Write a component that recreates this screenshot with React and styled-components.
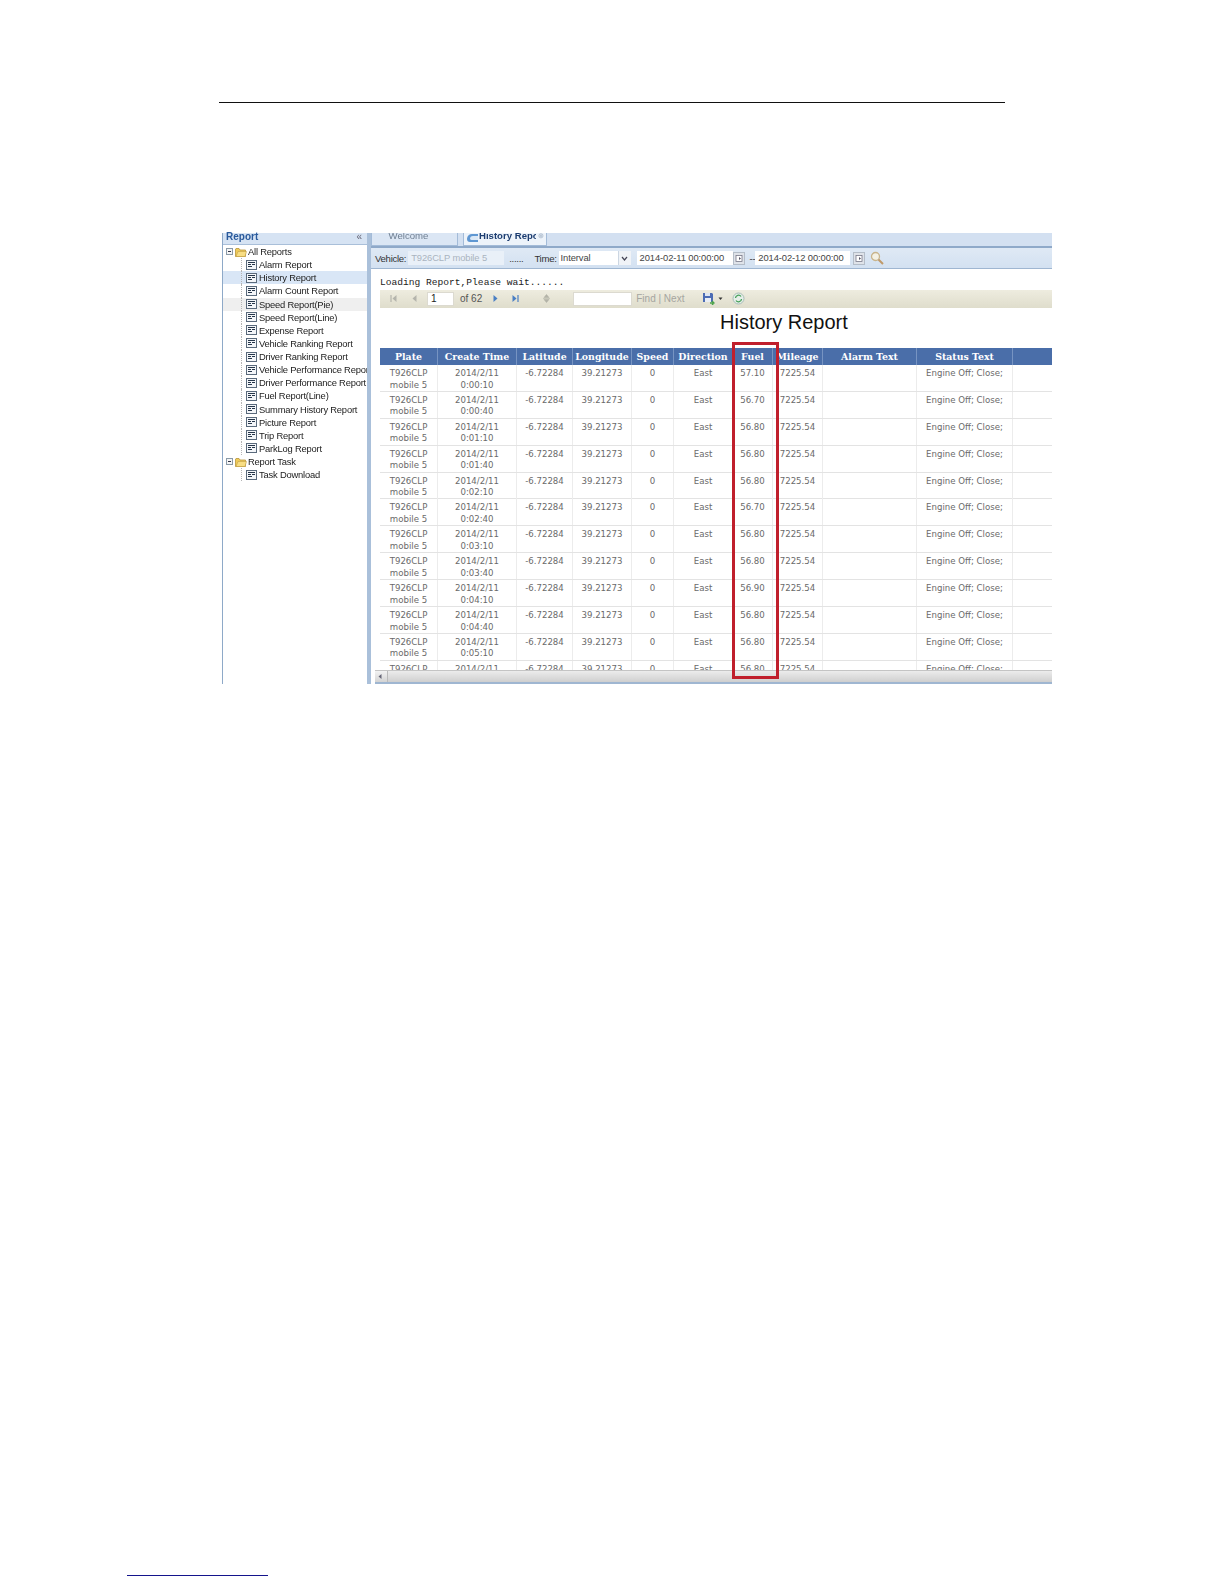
import React from 'react'
import styled, { createGlobalStyle } from 'styled-components'

const GlobalStyle = createGlobalStyle`
  html, body { margin: 0; padding: 0; background: #fff; }
`

const sans = `"Liberation Sans", Arial, sans-serif`
const columns = '58px 79px 56px 59px 42px 59px 40px 50px 94px 96px 40px'

const Page = styled.div`
  width: 1224px;
  height: 1584px;
  display: flex;
  flex-direction: column;
  font-family: ${sans};
  overflow: hidden;
`
const TopRule = styled.div`
  width: 786px;
  height: 1px;
  margin: 102px 0 0 219px;
  background: #111;
`
const Figure = styled.div`
  position: relative;
  display: flex;
  width: 830px;
  height: 451px;
  margin: 130px 0 0 222px;
  filter: blur(0.4px);
`
const FootRule = styled.div`
  width: 141px;
  height: 1px;
  margin: auto 0 8px 127px;
  background: #14148c;
`

/* left tree panel */
const Sidebar = styled.div`
  width: 145px;
  flex: none;
  display: flex;
  flex-direction: column;
  box-sizing: border-box;
  border-left: 1px solid #8ea9c8;
`
const SideHead = styled.div`
  height: 11px;
  flex: none;
  display: flex;
  align-items: flex-start;
  justify-content: space-between;
  padding: 0 5px 0 3px;
  background: #d6e3f3;
  border-bottom: 1px solid #a9bfd9;
  color: #2a5a9c;
  font-size: 10px;
  line-height: 7px;
  font-weight: bold;
  span { color: #667; font-size: 10px; font-weight: normal; }
`
const Tree = styled.div`
  display: flex;
  flex-direction: column;
`
const TreeRow = styled.div`
  height: 13.13px;
  display: flex;
  align-items: center;
  white-space: nowrap;
  overflow: hidden;
  font-size: 9.4px;
  letter-spacing: -0.2px;
  color: #222;
  background: ${p => p.$bg || 'transparent'};
`
const Expander = styled.svg`
  width: 7px;
  height: 7px;
  flex: none;
  margin: 0 2px 0 3px;
`
const Folder = styled.svg`
  width: 12px;
  height: 10px;
  flex: none;
  margin-right: 1px;
`
const Guide = styled.span`
  align-self: stretch;
  width: 5px;
  flex: none;
  margin-left: 18px;
  box-sizing: border-box;
  border-left: 1px dotted #b5b5b5;
`
const DocIcon = styled.svg`
  width: 11px;
  height: 10px;
  flex: none;
  margin-right: 2px;
`

/* right side */
const Main = styled.div`
  flex: 1;
  min-width: 0;
  display: flex;
  flex-direction: column;
  box-sizing: border-box;
  border-left: 4px solid #aac0da;
`
const Tabs = styled.div`
  height: 13px;
  flex: none;
  display: flex;
  gap: 5px;
  background: #d3e0f1;
  border-bottom: 2px solid #8fa9c9;
  overflow: hidden;
`
const Tab = styled.div`
  width: ${p => p.$width}px;
  flex: none;
  display: flex;
  align-items: flex-start;
  justify-content: ${p => (p.$active ? 'flex-start' : 'center')};
  box-sizing: border-box;
  padding: ${p => (p.$active ? '0 0 0 2px' : '0 12px 0 0')};
  background: ${p => (p.$active ? '#edf3fa' : '#dbe6f4')};
  border: 1px solid #a3bbd8;
  border-top: 0;
  color: ${p => (p.$active ? '#1d3d70' : '#6f7f92')};
  font-size: 9.6px;
  font-weight: ${p => (p.$active ? 'bold' : 'normal')};
  line-height: 5px;
  white-space: nowrap;
  overflow: hidden;
`
const TabIcon = styled.svg`
  width: 13px;
  height: 10px;
  flex: none;
`
const TabText = styled.span`
  width: 57px;
  height: 13px;
  flex: none;
  overflow: hidden;
  line-height: 5px;
`
const TabClose = styled.span`
  color: #b7c4d4;
  font-size: 7px;
  margin-left: 2px;
`
const QueryBar = styled.div`
  height: 20px;
  flex: none;
  display: flex;
  align-items: center;
  padding-left: 4px;
  background: linear-gradient(#dfe9f5, #d3e1f1);
  border-bottom: 1px solid #9fb6d1;
  font-size: 9.6px;
  color: #333;
`
const QueryLabel = styled.span`
  margin-left: ${p => p.$left || 0}px;
  letter-spacing: -0.3px;
  white-space: nowrap;
`
const Field = styled.div`
  width: ${p => p.$width}px;
  height: 14px;
  flex: none;
  box-sizing: border-box;
  margin-left: ${p => p.$left || 0}px;
  padding-left: ${p => p.$pad ?? 3}px;
  background: ${p => (p.$muted ? '#e9f0f8' : '#fff')};
  color: ${p => (p.$muted ? '#a9b4c0' : '#444')};
  font-size: 9.4px;
  letter-spacing: -0.1px;
  line-height: 14px;
  white-space: nowrap;
  overflow: hidden;
`
const SelectArrow = styled.div`
  width: 12px;
  height: 14px;
  flex: none;
  display: flex;
  align-items: center;
  justify-content: center;
  background: #f0f3f7;
  border-left: 1px solid #ccd6e2;
`
const CalButton = styled.svg`
  width: 12px;
  height: 13px;
  flex: none;
  margin-left: ${p => p.$left || 0}px;
`
const SearchIcon = styled.svg`
  width: 14px;
  height: 14px;
  flex: none;
  margin-left: 5px;
`
const Content = styled.div`
  flex: 1;
  min-height: 0;
  display: flex;
  flex-direction: column;
  background: #fff;
  overflow: hidden;
`
const Body = styled.div`
  flex: 1;
  min-height: 0;
  display: flex;
  flex-direction: column;
  padding-left: 9px;
`
const Loading = styled.div`
  height: 21px;
  flex: none;
  box-sizing: border-box;
  padding-top: 7px;
  font-family: "Liberation Mono", monospace;
  font-size: 9.6px;
  line-height: 13px;
  color: #222;
  white-space: nowrap;
`
const ReportBar = styled.div`
  height: 18px;
  flex: none;
  display: flex;
  align-items: center;
  box-sizing: border-box;
  padding-bottom: 1px;
  background: linear-gradient(#eeecdf, #dfddcc);
  font-size: 10px;
  color: #555;
`
const NavIcon = styled.svg`
  width: 9px;
  height: 9px;
  flex: none;
  margin-left: ${p => p.$left}px;
`
const BarInput = styled.div`
  width: ${p => p.$width}px;
  height: 14px;
  flex: none;
  box-sizing: border-box;
  margin-left: ${p => p.$left}px;
  padding-left: 3px;
  background: #fff;
  border: 1px solid #dcdad0;
  color: #222;
  font-size: 10px;
  line-height: 12px;
`
const BarText = styled.span`
  flex: none;
  margin-left: ${p => p.$left}px;
  color: ${p => p.$color || '#555'};
  white-space: nowrap;
`
const BarGlyph = styled.svg`
  width: ${p => p.$size}px;
  height: ${p => p.$size}px;
  flex: none;
  margin-left: ${p => p.$left}px;
`
const ReportView = styled.div`
  flex: 1;
  min-height: 0;
  overflow: hidden;
`
const Title = styled.div`
  height: 40px;
  box-sizing: border-box;
  padding: 2px 0 0 340px;
  font-size: 20px;
  line-height: 24px;
  color: #111;
  white-space: nowrap;
`
const HeadRow = styled.div`
  display: grid;
  grid-template-columns: ${columns};
  height: 17px;
  background: #4a6ea9;
`
const HeadCell = styled.div`
  border-right: 1px solid #7794c2;
  color: #fff;
  font-family: "DejaVu Serif", serif;
  font-size: 9.4px;
  font-weight: bold;
  line-height: 17px;
  text-align: center;
  white-space: nowrap;
`
const Row = styled.div`
  display: grid;
  grid-template-columns: ${columns};
  height: 26.9px;
  box-sizing: border-box;
  border-bottom: 1px solid #e3e3e3;
`
const Cell = styled.div`
  box-sizing: border-box;
  padding-top: 3px;
  border-right: 1px solid #ececec;
  color: #6a6a6a;
  font-family: "DejaVu Sans", sans-serif;
  font-size: 8.6px;
  line-height: 11.5px;
  text-align: center;
  white-space: nowrap;
`
const ScrollBar = styled.div`
  height: 14px;
  flex: none;
  margin-left: 4px;
  display: flex;
  align-items: center;
  box-sizing: border-box;
  border-top: 1px solid #c4c4c4;
  border-bottom: 2px solid #9fb6d1;
  background: linear-gradient(#f3f3f3, #d3d3d3);
`
const ScrollArrow = styled.svg`
  width: 6px;
  height: 7px;
  flex: none;
  margin-left: 2px;
`
const ScrollThumb = styled.div`
  flex: 1;
  height: 100%;
  margin-left: 4px;
  background: linear-gradient(#ececec, #cfcfcf);
  border-left: 1px solid #bbb;
`
const RedBox = styled.div`
  position: absolute;
  left: 510px;
  top: 109px;
  width: 47px;
  height: 337px;
  box-sizing: border-box;
  border: 3px solid #c01f2c;
`

const reports = [
  'Alarm Report', 'History Report', 'Alarm Count Report', 'Speed Report(Pie)', 'Speed Report(Line)',
  'Expense Report', 'Vehicle Ranking Report', 'Driver Ranking Report', 'Vehicle Performance Report',
  'Driver Performance Report', 'Fuel Report(Line)', 'Summary History Report', 'Picture Report',
  'Trip Report', 'ParkLog Report',
]
const rowBg = { 'History Report': '#d9e6f6', 'Speed Report(Pie)': '#efefef' }

const headers = ['Plate', 'Create Time', 'Latitude', 'Longitude', 'Speed', 'Direction', 'Fuel', 'Mileage', 'Alarm Text', 'Status Text', '']
const samples = [
  ['0:00:10', '57.10'], ['0:00:40', '56.70'], ['0:01:10', '56.80'], ['0:01:40', '56.80'],
  ['0:02:10', '56.80'], ['0:02:40', '56.70'], ['0:03:10', '56.80'], ['0:03:40', '56.80'],
  ['0:04:10', '56.90'], ['0:04:40', '56.80'], ['0:05:10', '56.80'], ['0:05:40', '56.80'],
]

const Minus = () => (
  <Expander viewBox="0 0 7 7">
    <rect x="0.5" y="0.5" width="6" height="6" fill="#f4f4f4" stroke="#8a9aa8" />
    <path d="M2 3.5h3" stroke="#334" />
  </Expander>
)
const FolderIcon = () => (
  <Folder viewBox="0 0 12 10">
    <path d="M0.5 2V9.5H10.5V3H5L4 1.5H1Z" fill="#f0cb58" stroke="#b8963c" strokeWidth="0.8" />
    <path d="M1 9.5L3 4.5H11.5L10 9.5Z" fill="#f8de84" stroke="#c2a044" strokeWidth="0.6" />
  </Folder>
)
const ReportIcon = () => (
  <DocIcon viewBox="0 0 11 10">
    <rect x="0.5" y="0.5" width="10" height="9" fill="#f4f6f9" stroke="#5a6a7c" />
    <path d="M2 2.5h7M2 4.5h3M6 4.5h3M2 6.5h4" stroke="#26364a" />
  </DocIcon>
)
const Nav = ({ left, dir, bar, color }) => (
  <NavIcon $left={left} viewBox="0 0 9 9">
    <path d={dir === 'left' ? 'M6.5 1L2.5 4.5L6.5 8Z' : 'M2.5 1L6.5 4.5L2.5 8Z'} fill={color} />
    {bar && <path d={dir === 'left' ? 'M1 1V8' : 'M8 1V8'} stroke={color} strokeWidth="1.2" />}
  </NavIcon>
)
const Calendar = ({ left }) => (
  <CalButton $left={left} viewBox="0 0 12 13">
    <rect x="0.5" y="0.5" width="11" height="12" fill="#dfe3e9" stroke="#b4bdc8" />
    <rect x="3" y="3.5" width="6" height="6" fill="#fff" stroke="#778" strokeWidth="0.8" />
    <path d="M6 5L8 6.5L6 8Z" fill="#556" />
  </CalButton>
)

const App = () => (
  <Page>
    <GlobalStyle />
    <TopRule />
    <Figure>
      <Sidebar>
        <SideHead>Report<span>«</span></SideHead>
        <Tree>
          <TreeRow><Minus /><FolderIcon />All Reports</TreeRow>
          {reports.map(name => (
            <TreeRow key={name} $bg={rowBg[name]}><Guide /><ReportIcon />{name}</TreeRow>
          ))}
          <TreeRow><Minus /><FolderIcon />Report Task</TreeRow>
          <TreeRow><Guide /><ReportIcon />Task Download</TreeRow>
        </Tree>
      </Sidebar>
      <Main>
        <Tabs>
          <Tab $width={87}>Welcome</Tab>
          <Tab $width={84} $active>
            <TabIcon viewBox="0 0 13 10">
              <path d="M1 6A5 5 0 0 1 7 1H12V9H4A3 3 0 0 1 1 6Z" fill="#5f97d2" />
              <path d="M4 6A3 3 0 0 1 7 3H12V7H6A2 2 0 0 1 4 6Z" fill="#dbe8f6" />
            </TabIcon>
            <TabText>History Report</TabText>
            <TabClose>⊗</TabClose>
          </Tab>
        </Tabs>
        <QueryBar>
          <QueryLabel>Vehicle:</QueryLabel>
          <Field $width={96} $left={2} $muted>T926CLP mobile 5</Field>
          <QueryLabel $left={5}>......</QueryLabel>
          <QueryLabel $left={11}>Time:</QueryLabel>
          <Field $width={59} $left={2} $pad={2}>Interval</Field>
          <SelectArrow>
            <svg width="7" height="5" viewBox="0 0 7 5"><path d="M1 1L3.5 4L6 1" fill="none" stroke="#445" strokeWidth="1.2" /></svg>
          </SelectArrow>
          <Field $width={96} $left={6}>2014-02-11 00:00:00</Field>
          <Calendar />
          <QueryLabel $left={5}>--</QueryLabel>
          <Field $width={95}>2014-02-12 00:00:00</Field>
          <Calendar left={3} />
          <SearchIcon viewBox="0 0 14 14">
            <circle cx="5.5" cy="5.5" r="4" fill="#f4f1e4" stroke="#c8b48c" strokeWidth="1.3" />
            <path d="M8.5 8.5L13 13" stroke="#c09a6a" strokeWidth="2" />
          </SearchIcon>
        </QueryBar>
        <Content>
          <Body>
            <Loading>Loading Report,Please wait......</Loading>
            <ReportBar>
              <Nav left={10} dir="left" bar color="#b4b4ac" />
              <Nav left={11} dir="left" color="#b4b4ac" />
              <BarInput $width={27} $left={8}>1</BarInput>
              <BarText $left={6}>of 62</BarText>
              <Nav left={9} dir="right" color="#4a7fc4" />
              <Nav left={10} dir="right" bar color="#4a7fc4" />
              <BarGlyph $size={9} $left={23} viewBox="0 0 9 9">
                <path d="M4.5 0.5L7 3.5H2ZM4.5 8.5L7 5.5H2ZM1 4.5H8" fill="#b4b4a8" stroke="#b4b4a8" strokeWidth="0.6" />
              </BarGlyph>
              <BarInput $width={59} $left={22} />
              <BarText $left={4} $color="#a5a5a0">Find | Next</BarText>
              <BarGlyph $size={13} $left={18} viewBox="0 0 13 13">
                <path d="M1 1H10L11 2V10H1Z" fill="#4c6cb4" />
                <rect x="3" y="1" width="5" height="3" fill="#dfe6f2" />
                <rect x="3" y="6" width="6" height="4" fill="#e8edf5" />
                <path d="M8 11H11M10 9L12 11L10 13" fill="none" stroke="#4aa24a" strokeWidth="1.3" />
              </BarGlyph>
              <BarGlyph $size={5} $left={3} viewBox="0 0 5 5">
                <path d="M0.5 1.5H4.5L2.5 4Z" fill="#333" />
              </BarGlyph>
              <BarGlyph $size={13} $left={9} viewBox="0 0 13 13">
                <circle cx="6.5" cy="6.5" r="5.5" fill="#e6efe8" stroke="#a9bdb8" />
                <path d="M3.5 6A3 3 0 0 1 9 4.5M9.5 7A3 3 0 0 1 4 8.5" fill="none" stroke="#46a05a" strokeWidth="1.3" />
              </BarGlyph>
            </ReportBar>
            <ReportView>
              <Title>History Report</Title>
              <HeadRow>
                {headers.map((h, i) => <HeadCell key={i}>{h}</HeadCell>)}
              </HeadRow>
              {samples.map(([time, fuel]) => (
                <Row key={time}>
                  <Cell>T926CLP<br />mobile 5</Cell>
                  <Cell>2014/2/11<br />{time}</Cell>
                  <Cell>-6.72284</Cell>
                  <Cell>39.21273</Cell>
                  <Cell>0</Cell>
                  <Cell>East</Cell>
                  <Cell>{fuel}</Cell>
                  <Cell>7225.54</Cell>
                  <Cell />
                  <Cell>Engine Off; Close;</Cell>
                  <Cell />
                </Row>
              ))}
            </ReportView>
          </Body>
          <ScrollBar>
            <ScrollArrow viewBox="0 0 6 7"><path d="M4.5 1L1.5 3.5L4.5 6Z" fill="#667" /></ScrollArrow>
            <ScrollThumb />
          </ScrollBar>
        </Content>
      </Main>
      <RedBox />
    </Figure>
    <FootRule />
  </Page>
)

export default App
